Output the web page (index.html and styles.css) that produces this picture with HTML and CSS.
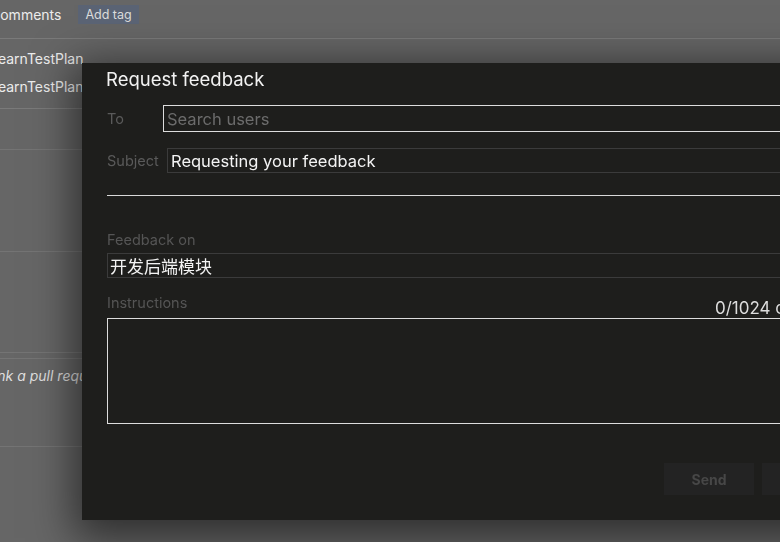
FILE: index.html
```html
<!DOCTYPE html>
<html lang="en">
<head>
<meta charset="utf-8">
<title>Request feedback</title>
<link rel="stylesheet" href="styles.css">
</head>
<body>
<div class="page">
  <div class="head-row">
    <span class="head-title">Comments</span>
    <span class="tag">Add tag</span>
  </div>
  <div class="rows">
    <div class="row-item">LearnTestPlan</div>
    <div class="row-item">LearnTestPlan</div>
  </div>
  <div class="section s1"></div>
  <div class="section s2"></div>
  <div class="section s3"></div>
  <div class="section s4"><span class="link-pr">Link a pull request</span></div>
  <div class="section s5"></div>
</div>

<div class="modal">
  <h1 class="modal-title">Request feedback</h1>
  <div class="field-row to-row">
    <label class="row-label to-label">To</label>
    <div class="input input-light"><span class="placeholder">Search users</span></div>
  </div>
  <div class="field-row subject-row">
    <label class="row-label subject-label">Subject</label>
    <div class="input input-dark subject-input">Requesting your feedback</div>
  </div>
  <div class="separator"></div>
  <div class="stack-label feedback-label">Feedback on</div>
  <div class="input input-dark feedback-input">开发后端模块</div>
  <div class="instr-head">
    <span class="stack-label instr-label">Instructions</span>
    <span class="counter">0/1024 characters</span>
  </div>
  <div class="textarea"></div>
  <div class="footer">
    <button class="btn">Send</button>
    <button class="btn">Cancel</button>
  </div>
</div>
</body>
</html>
```

FILE: styles.css
```css
html, body {
  margin: 0;
  padding: 0;
}
body {
  width: 780px;
  height: 542px;
  overflow: hidden;
  background: #666666;
  font-family: Inter, "Noto Sans", "Noto Sans CJK SC", sans-serif;
  color: #e9e9e9;
}
.page {
  margin-left: -10px;
  width: 800px;
}
.head-row {
  height: 39px;
  display: flex;
  align-items: flex-start;
  padding-top: 5px;
  box-sizing: border-box;
  gap: 17px;
  border-bottom: 1px solid #7a7a7a;
}
.head-title {
  font-size: 14px;
  line-height: 19px;
  color: #ececec;
}
.tag {
  background: #5b6475;
  color: #dcdcdc;
  font-size: 12.5px;
  padding: 2px 7px;
  line-height: 15px;
}
.rows {
  height: 70px;
  padding-top: 6px;
  box-sizing: border-box;
  border-bottom: 1px solid #7a7a7a;
}
.row-item {
  font-size: 14px;
  height: 28px;
  line-height: 28px;
  color: #ececec;
}
.section {
  border-bottom: 1px solid #747474;
}
.s1 { height: 40px; }
.s2 { height: 101px; }
.s3 { height: 100px; }
.s4 {
  height: 89px;
  border-top: 1px solid #747474;
  margin-top: 5px;
  padding-top: 6px;
  box-sizing: border-box;
  text-indent: -4px;
}
.link-pr {
  font-style: italic;
  font-size: 14px;
  color: #dedede;
}
.s5 { height: 100px; border-bottom: none; }

.modal {
  position: fixed;
  left: 82px;
  top: 63px;
  width: 760px;
  height: 457px;
  background: #1e1e1c;
  box-shadow: 0 10px 40px 8px rgba(0, 0, 0, 0.55);
  padding: 4px 0 0 24px;
  box-sizing: border-box;
  overflow: hidden;
}
.modal-title {
  margin: 0;
  font-size: 18.5px;
  font-weight: 400;
  line-height: 24px;
  color: #f2f2f2;
}
.field-row {
  display: flex;
  align-items: center;
}
.to-row {
  margin-top: 14px;
  padding-left: 1px;
}
.subject-row {
  margin-top: 16px;
  padding-left: 1px;
}
.row-label {
  font-size: 14.5px;
  color: #5a5a5a;
  flex: none;
}
.to-label { width: 56px; }
.subject-label { width: 60px; }
.input {
  box-sizing: border-box;
  width: 640px;
  font-size: 16.5px;
  color: #f4f4f4;
  padding-left: 3px;
  display: flex;
  align-items: center;
}
.input-light {
  height: 27px;
  border: 1px solid #dddddd;
}
.input-dark {
  height: 25px;
  border: 1px solid #3b3b3b;
}
.placeholder {
  color: #6c6c6c;
}
.separator {
  margin-top: 22px;
  height: 1px;
  background: #d9d9d9;
  margin-left: 1px;
}
.stack-label {
  font-size: 14.5px;
  color: #555555;
  line-height: 16px;
}
.feedback-label {
  margin-top: 36px;
  margin-left: 1px;
}
.feedback-input {
  margin-top: 5px;
  margin-left: 1px;
  width: 700px;
  padding-left: 2px;
  font-size: 17px;
}
.instr-head {
  display: flex;
  align-items: flex-end;
  margin-top: 17px;
  margin-left: 1px;
}
.instr-label {
  width: 608px;
  flex: none;
  padding-bottom: 7px;
}
.counter {
  font-size: 17px;
  color: #dddddd;
  line-height: 20px;
  white-space: nowrap;
  flex: none;
}
.textarea {
  margin-left: 1px;
  height: 106px;
  border: 1px solid #dddddd;
  box-sizing: border-box;
  width: 700px;
}
.footer {
  display: flex;
  gap: 8px;
  margin-top: 39px;
  padding-left: 558px;
}
.btn {
  width: 90px;
  height: 32px;
  flex: none;
  background: #232323;
  border: none;
  color: #474747;
  font-family: Inter, "Noto Sans", sans-serif;
  font-size: 14px;
  font-weight: 700;
  padding: 0;
}
```
